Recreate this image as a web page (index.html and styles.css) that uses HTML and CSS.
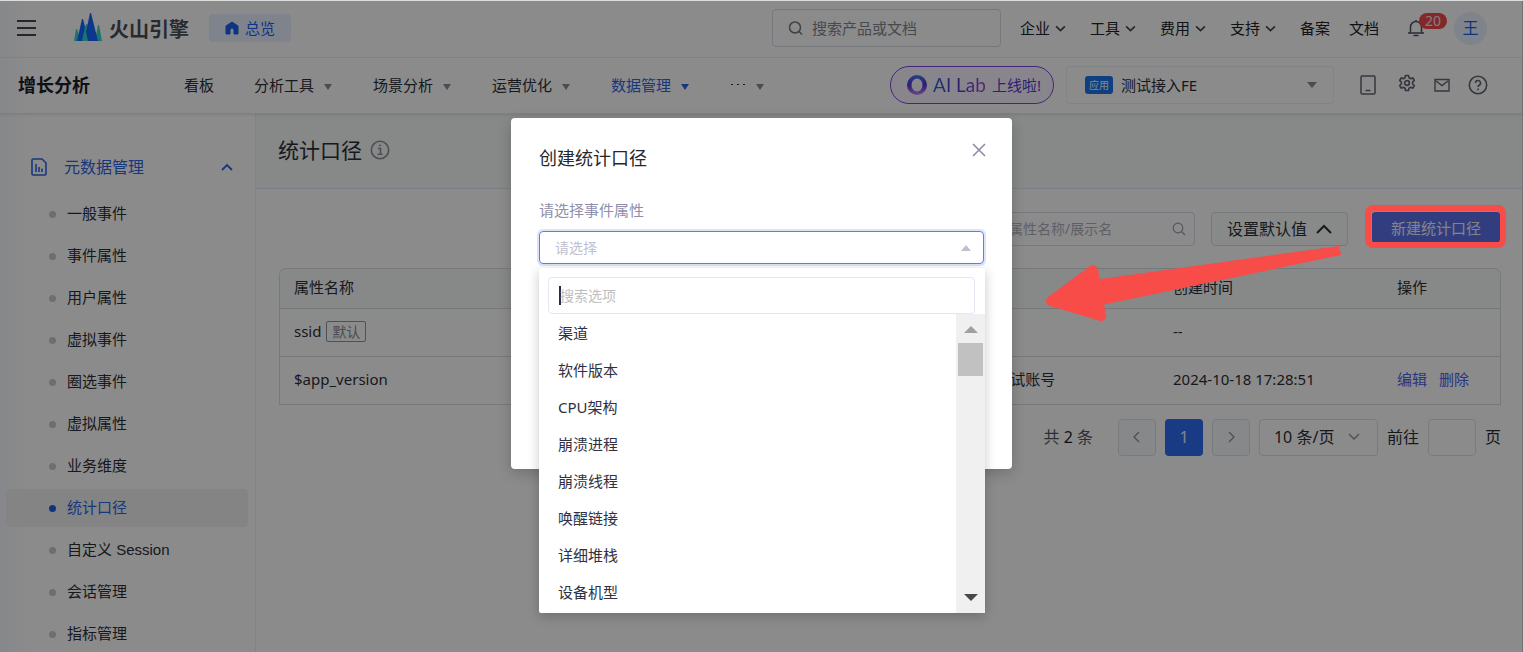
FILE: index.html
```html
<!DOCTYPE html>
<html lang="zh-CN">
<head>
<meta charset="utf-8">
<title>统计口径</title>
<link rel="stylesheet" href="styles.css">
</head>
<body>
<div class="page">
  <header class="topbar">
    <button class="menu-btn" aria-label="菜单"><svg width="20" height="18" viewBox="0 0 20 18" fill="none" stroke="currentColor" stroke-width="2"><path d="M0 2h19M0 9h19M0 16h19"/></svg></button>
    <a class="logo" href="#">
      <svg width="28" height="28" viewBox="0 0 28 28"><path fill="#32d6c4" d="M0 28L2 16h1l4 12zM6 28L12 11h1l7 17zM21 28l3-16h1l3 16z"/><path fill="#1664ff" d="M3 28L8 6h1l2 8-3 14zM14 28l-2-9L16 0h1l7 28z"/></svg>
      <span>火山引擎</span>
    </a>
    <a class="overview" href="#"><svg width="14" height="14" viewBox="0 0 14 14"><path fill="currentColor" d="M7 1l6 4v8H9V9a2 2 0 0 0-4 0v4H1V5z" stroke="currentColor" stroke-linejoin="round"/></svg>总览</a>
    <label class="top-search"><svg width="16" height="16" viewBox="0 0 16 16" fill="none" stroke="currentColor" stroke-width="1.5"><circle cx="7" cy="7.500" r="5.500"/><path d="M11 11.500l3 3"/></svg><input type="text" placeholder="搜索产品或文档" aria-label="搜索产品或文档"></label>
    <nav class="top-links">
      <a href="#">企业<svg class="chev" viewBox="0 0 10 6"><path d="M1 1l4 4 4-4"/></svg></a>
      <a href="#">工具<svg class="chev" viewBox="0 0 10 6"><path d="M1 1l4 4 4-4"/></svg></a>
      <a href="#">费用<svg class="chev" viewBox="0 0 10 6"><path d="M1 1l4 4 4-4"/></svg></a>
      <a href="#">支持<svg class="chev" viewBox="0 0 10 6"><path d="M1 1l4 4 4-4"/></svg></a>
    </nav>
    <nav class="plain-links"><a href="#">备案</a><a href="#">文档</a></nav>
    <button class="bell" aria-label="通知"><svg width="16" height="18" viewBox="0 0 16 18" fill="none" stroke="currentColor" stroke-width="1.500"><path d="M0 14h16M2.500 14V8a5.500 5.500 0 0 1 11 0v6M8 2.500V1M5.500 16.500h5"/></svg><span class="badge">20</span></button>
    <button class="avatar">王</button>
  </header>

  <div class="navbar">
    <strong class="product">增长分析</strong>
    <nav class="main-nav">
      <a href="#">看板</a>
      <a href="#">分析工具<i class="tri"></i></a>
      <a href="#">场景分析<i class="tri"></i></a>
      <a href="#">运营优化<i class="tri"></i></a>
      <a class="active" href="#">数据管理<i class="tri"></i></a>
      <a class="more" href="#"><svg width="16" height="2" viewBox="0 0 16 2" fill="currentColor"><path d="M1 0h2v1H1zM7 0h2v1H7zM13 0h2v1h-2z"/></svg><i class="tri"></i></a>
    </nav>
    <a class="ai-lab" href="#">
      <svg width="20" height="20" viewBox="0 0 20 20"><defs><linearGradient id="ring" x1="0" y1="0" x2="0" y2="1"><stop offset="0" stop-color="#3f7fe8"/><stop offset=".5" stop-color="#5a2fd8"/><stop offset="1" stop-color="#c08ae8"/></linearGradient></defs><path fill="url(#ring)" fill-rule="evenodd" d="M10 0a10 10 0 1 0 0 20 10 10 0 0 0 0-20zM10.500 3.500a5.500 6.500 0 1 1-1 13 5.500 6.500 0 0 1 1-13z"/></svg>
      <span class="ai-name">AI Lab</span><span class="ai-live">上线啦!</span>
    </a>
    <label class="app-select"><span class="app-tag">应用</span><select aria-label="应用"><option>测试接入FE</option></select><i class="tri"></i></label>
    <div class="tools">
      <button aria-label="手机"><svg width="16" height="20" viewBox="0 0 16 20" fill="none" stroke="currentColor" stroke-width="1.500"><rect x="1" y="1" width="14" height="18" rx="1"/><path d="M5.500 15.500h5"/></svg></button>
      <button class="gear" aria-label="设置"><svg width="18" height="18" viewBox="0 0 18 18" fill="none" stroke="currentColor" stroke-width="1.700" stroke-linejoin="round"><path d="M7.500 1.500h3l.5 2.300 1.600.9 2.200-.8 1.500 2.600-1.700 1.600v1.800l1.700 1.600-1.500 2.600-2.200-.8-1.600.9-.5 2.300h-3L7 14.200l-1.600-.9-2.200.8-1.500-2.600 1.700-1.600V8.100L1.700 6.500l1.500-2.600 2.200.8L7 3.800z"/><circle cx="9" cy="9" r="2.300"/></svg></button>
      <button aria-label="消息"><svg width="16" height="14" viewBox="0 0 16 14" fill="none" stroke="currentColor" stroke-width="1.400"><path d="M1 1.500h14v11.500H1zM2 3l6 4.500L14 3"/></svg></button>
      <button aria-label="帮助"><svg width="20" height="20" viewBox="0 0 20 20" fill="none" stroke="currentColor" stroke-width="1.600"><circle cx="10" cy="10" r="8.700"/><path d="M7.500 8a2.500 2.500 0 1 1 3.700 2.200c-.8.5-1.200.9-1.200 1.800M10 13.500v1.700"/></svg></button>
    </div>
  </div>

  <div class="body">
    <aside class="sidebar">
      <button class="group">
        <svg width="16" height="18" viewBox="0 0 16 18" fill="none" stroke="currentColor" stroke-width="1.600"><path d="M1 2a1 1 0 0 1 1-1h9l4 4v11a1 1 0 0 1-1 1H2a1 1 0 0 1-1-1zM5 6v8M8 9v5M11 10.500V14"/></svg>
        <span>元数据管理</span>
        <svg class="fold" width="12" height="8" viewBox="0 0 12 8" fill="none" stroke="currentColor" stroke-width="1.800"><path d="M1 7l5-5 5 5"/></svg>
      </button>
      <nav class="side-list">
        <a href="#">一般事件</a>
        <a href="#">事件属性</a>
        <a href="#">用户属性</a>
        <a href="#">虚拟事件</a>
        <a href="#">圈选事件</a>
        <a href="#">虚拟属性</a>
        <a href="#">业务维度</a>
        <a class="active" href="#">统计口径</a>
        <a href="#">自定义 Session</a>
        <a href="#">会话管理</a>
        <a href="#">指标管理</a>
      </nav>
    </aside>

    <main class="content">
      <div class="title-row">
        <h1>统计口径</h1>
        <svg width="20" height="20" viewBox="0 0 20 20" fill="none" stroke="currentColor" stroke-width="1.600"><circle cx="10" cy="10" r="8.700"/><path d="M8 8.500h2.500v5.500M7.500 14.300h5M9 5.500h2" /></svg>
      </div>
      <div class="panel">
        <div class="toolbar">
          <label class="filter"><input type="text" placeholder="搜索属性名称/展示名" aria-label="搜索属性名称"><svg width="14" height="14" viewBox="0 0 14 14" fill="none" stroke="currentColor" stroke-width="1.200"><circle cx="6" cy="6" r="4.800"/><path d="M9.500 9.500l3.500 3.500"/></svg></label>
          <button class="default-btn">设置默认值<svg width="16" height="10" viewBox="0 0 16 10" fill="none" stroke="currentColor" stroke-width="2"><path d="M1 9l7-7 7 7"/></svg></button>
          <button class="primary">新建统计口径</button>
        </div>
        <div class="table-wrap">
          <table>
            <colgroup><col><col class="col-user"><col class="col-time"><col class="col-ops"></colgroup>
            <thead><tr><th>属性名称</th><th>创建人</th><th>创建时间</th><th>操作</th></tr></thead>
            <tbody>
              <tr><td>ssid <span class="tag">默认</span></td><td></td><td>--</td><td></td></tr>
              <tr><td>$app_version</td><td>FE接入测试账号</td><td>2024-10-18 17:28:51</td><td><span class="ops"><a href="#">编辑</a><a href="#">删除</a></span></td></tr>
            </tbody>
          </table>
        </div>
        <div class="pager">
          <span class="total">共 <b>2</b> 条</span>
          <button class="pg off" aria-label="上一页"><svg width="8" height="12" viewBox="0 0 8 12"><path d="M6 1L1 6l5 5"/></svg></button>
          <button class="pg on">1</button>
          <button class="pg off" aria-label="下一页"><svg width="8" height="12" viewBox="0 0 8 12"><path d="M2 1l5 5-5 5"/></svg></button>
          <label class="size"><select aria-label="每页条数"><option>10 条/页</option></select><svg width="12" height="8" viewBox="0 0 12 8"><path d="M1 1l5 5 5-5"/></svg></label>
          <label class="jump">前往<input type="text">页</label>
        </div>
      </div>
    </main>
  </div>
</div>

<div class="mask"></div>

<section class="dialog" role="dialog" aria-labelledby="dialog-title">
  <div class="dialog-head">
    <h2 id="dialog-title">创建统计口径</h2>
    <button class="close" aria-label="关闭"><svg width="14" height="14" viewBox="0 0 14 14" fill="none" stroke="currentColor" stroke-width="1.500"><path d="M1 1l12 12M13 1L1 13"/></svg></button>
  </div>
  <label class="field-label" for="attr">请选择事件属性</label>
  <div class="field">
    <select id="attr"><option>请选择</option></select>
    <i class="tri up"></i>
    <div class="dropdown">
      <div class="option-search"><i class="caret"></i><input type="text" placeholder="搜索选项" aria-label="搜索选项"></div>
      <div class="options-wrap">
        <ul class="options" role="listbox">
          <li role="option">渠道</li>
          <li role="option">软件版本</li>
          <li role="option">CPU架构</li>
          <li role="option">崩溃进程</li>
          <li role="option">崩溃线程</li>
          <li role="option">唤醒链接</li>
          <li role="option">详细堆栈</li>
          <li role="option">设备机型</li>
        </ul>
        <div class="scrollbar"><i class="arrow-up"></i><i class="thumb"></i><i class="arrow-down"></i></div>
      </div>
    </div>
  </div>
</section>

<svg class="callout" width="463" height="120" viewBox="0 0 463 120">
  <rect x="325" y="3" width="135" height="37" rx="5" fill="none" stroke="#f84c48" stroke-width="6"/>
  <path fill="#f84c48" stroke="#f84c48" stroke-width="10" stroke-linejoin="round" d="M8 96L50 65l8 46z"/>
  <path fill="#f84c48" d="M54 74.500L296 41l2 9L59 100z"/>
</svg>
</body>
</html>
```
FILE: styles.css
```css
* { box-sizing: border-box; }
html { height: 100%; overflow: hidden; }
body {
  margin: 0;
  height: 100%;
  overflow: hidden;
  position: relative;
  font-family: "Noto Sans", "Noto Sans CJK SC", sans-serif;
  font-size: 15px;
  line-height: 22px;
  color: #2c2f36;
  background: #fff;
}
button, input, select { font: inherit; color: inherit; margin: 0; padding: 0; border: 0; background: none; outline: 0; appearance: none; }
a { color: inherit; text-decoration: none; }
svg { display: block; flex: none; }
h1, h2, ul { margin: 0; padding: 0; font-weight: 400; list-style: none; }
i { flex: none; }

.page {
  min-height: 100%;
  display: flex;
  flex-direction: column;
  border-top: 1px solid #dcdedd;
  border-right: 1px solid #d0d0d0;
  background: linear-gradient(90deg, #f5f7fd, #fefefe 32px);
}

.tri { width: 0; height: 0; border: 5px solid transparent; border-top: 6px solid #858b98; border-bottom: 0; }

/* top bar */
.topbar { display: flex; align-items: center; height: 57px; padding: 0 35px 2px 17px; border-bottom: 1px solid #f0f0f2; color: #1d2129; }
.menu-btn { color: #42464e; }
.logo { display: flex; align-items: center; gap: 7px; margin-left: 37px; font-size: 20px; font-weight: 700; color: #4a4e56; }
.logo svg { margin-bottom: 2px; }
.logo span { padding-top: 4px; }
.overview { display: flex; align-items: center; gap: 6px; height: 28px; margin-left: 20px; padding: 0 16px; border-radius: 4px; background: #e8eefe; color: #1b5fe8; }
.top-search { display: flex; align-items: center; gap: 8px; width: 229px; height: 38px; margin-left: auto; padding: 0 15px; border: 1px solid #d5dae3; border-radius: 4px; color: #73767c; }
.top-search input { width: 100%; min-width: 0; }
.top-search input::placeholder { color: #83868c; opacity: 1; }
.top-links { display: flex; gap: 24px; margin-left: 19px; }
.top-links a { display: flex; align-items: center; gap: 5px; }
.chev { width: 11px; height: 7px; fill: none; stroke: #42464e; stroke-width: 1.5; }
.plain-links { display: flex; gap: 19px; margin-left: 24px; }
.bell { position: relative; margin-left: 29px; color: #4e5362; }
.badge { position: absolute; left: 11px; top: -6px; width: 28px; height: 16px; border-radius: 8px; background: #f0484c; color: #e8e4e4; font-size: 14px; line-height: 16px; text-align: center; }
.avatar { width: 33px; height: 33px; margin-left: 30px; border-radius: 50%; background: #e8eefe; color: #1b5fe8; font-size: 16px; }

/* product navigation */
.navbar { position: relative; display: flex; align-items: center; height: 56px; padding: 0 34px 2px 18px; border-bottom: 1px solid #e6e7ea; box-shadow: 0 1px 3px rgba(0, 0, 0, .1); }
.product { font-size: 18px; font-weight: 700; color: #1d2026; }
.main-nav { display: flex; gap: 40px; margin-left: 94px; }
.main-nav a { display: flex; align-items: center; gap: 9px; }
.main-nav .tri { margin: 4px 1px 0; border-left-width: 4px; border-right-width: 4px; }
.main-nav .active { color: #2a66e4; }
.main-nav .active .tri { border-top-color: #2a66e4; }
.ai-lab { display: flex; align-items: center; height: 38px; margin-left: auto; padding: 0 12px 0 16px; border: 1px solid #7a45e0; border-radius: 19px; background: #f8f5ff; color: #5b35c9; }
.ai-name { margin: 0 6px; font-family: Lato, sans-serif; font-size: 19px; background: linear-gradient(90deg, #3569cf, #5a35d0 50%, #a14fd0); background-clip: text; color: transparent; -webkit-text-stroke: 0; }
.app-select { display: flex; align-items: center; width: 268px; height: 38px; margin-left: 12px; padding: 0 16px 0 18px; border: 1px solid #eceef2; border-radius: 4px; }
.app-tag { flex: none; width: 28px; height: 18px; border-radius: 3px; background: #1874ec; color: #f2f4f8; font-size: 10px; line-height: 18px; text-align: center; }
.app-select select { flex: 1; min-width: 0; padding-left: 8px; }
.tools { display: flex; align-items: center; gap: 18px; margin-left: 26px; color: #616672; }
.gear { margin-left: 4px; padding-bottom: 4px; }

/* sidebar */
.body { display: flex; flex: 1; }
.sidebar { width: 256px; flex: none; padding: 35px 7px 0 6px; border-right: 1px solid #eceef0; }
.group { display: flex; align-items: center; width: 100%; height: 36px; padding: 0 15px 0 25px; font-size: 16px; color: #2a66e4; }
.group span { margin-left: 17px; }
.fold { margin-left: auto; }
.side-list { display: flex; flex-direction: column; gap: 4px; margin-top: 10px; }
.side-list a { display: flex; align-items: center; gap: 11px; height: 38px; padding-left: 43px; border-radius: 4px; font-family: "Liberation Sans", "Noto Sans CJK SC", sans-serif; }
.side-list a::before { content: ""; width: 7px; height: 7px; border-radius: 50%; background: #c5c8d2; }
.side-list .active { background: #f1f1f2; color: #2a66e4; }
.side-list .active::before { background: #1b5fe8; }

/* content */
.content { flex: 1; min-width: 0; }
.title-row { display: flex; align-items: center; gap: 8px; height: 75px; padding: 0 22px 2px; border-bottom: 1px solid #dfe3ee; background: #f6faf9; color: #8f919d; }
.title-row h1 { font-size: 21px; line-height: 30px; color: #2c2f36; }
.panel { padding: 23px 21px 0 23px; }
.toolbar { display: flex; justify-content: flex-end; align-items: flex-start; height: 56px; }
.filter { display: flex; align-items: center; width: 235px; height: 34px; margin-right: 16px; padding: 0 8px 0 20px; border: 1px solid #d9dae8; border-radius: 4px; font-size: 14px; color: #9c9cab; }
.filter input { flex: 1; min-width: 0; }
.filter input::placeholder { color: #aeaebd; opacity: 1; }
.default-btn { display: flex; align-items: center; gap: 9px; height: 34px; margin-right: 24px; padding: 0 15px; border: 1px solid #d8dbe0; border-radius: 4px; background: #f8faf9; font-size: 16px; }
.primary { height: 31px; padding: 0 19px; margin-right: 1px; border-radius: 3px; background: #5b70e8; color: #f0f0f8; }
.table-wrap { border: 1px solid #d8dce0; border-bottom: 0; border-radius: 7px 7px 0 0; overflow: hidden; }
table { width: 100%; table-layout: fixed; border-collapse: collapse; }
.col-user { width: 224px; }
.col-time { width: 224px; }
.col-ops { width: 117px; }
th, td { height: 48px; padding: 0 0 2px 14px; border-bottom: 1px solid #d8dce0; text-align: left; font-weight: 400; }
th { height: 39px; background: #f6f7f7; }
.tag { display: inline-block; margin-left: 1px; padding: 0 5px; border: 1px solid #8b94a0; border-radius: 2px; font-size: 14px; line-height: 19px; color: #858b95; }
.ops { display: flex; gap: 12px; color: #4b5fe6; }
.pager { display: flex; justify-content: flex-end; align-items: center; gap: 9px; margin-top: 14px; font-size: 16px; }
.pager svg { fill: none; stroke: #8a8e98; stroke-width: 1.3; }
.total { margin-right: 16px; color: #54585f; }
.total b { font-weight: 400; color: #1d2129; }
.pg { display: flex; align-items: center; justify-content: center; width: 38px; height: 37px; border-radius: 4px; }
.off { border: 1px solid #dcdfe4; background: #f6f7f9; }
.on { background: #2d6cf0; color: #eef2fb; }
.size { display: flex; align-items: center; width: 119px; height: 37px; padding: 0 17px 0 14px; border: 1px solid #dcdfe4; border-radius: 4px; }
.size select { flex: 1; min-width: 0; }
.jump { display: flex; align-items: center; gap: 9px; }
.jump input { width: 48px; height: 37px; border: 1px solid #dcdfe4; border-radius: 4px; }

/* dialog */
.mask { position: absolute; inset: 1px 0 0; background: rgba(0, 0, 0, .45); }
.dialog { position: absolute; top: 118px; left: 0; right: 0; width: 501px; min-height: 351px; margin: 0 auto; padding: 27px 28px; border-radius: 4px; background: #fff; box-shadow: 0 4px 14px rgba(0, 0, 0, .2); }
.dialog-head { display: flex; justify-content: space-between; align-items: flex-start; }
.dialog-head h2 { font-size: 18px; line-height: 26px; color: #26282c; }
.close { margin: -2px -2px 0 0; color: #8988a8; }
.field-label { display: block; margin-top: 28px; color: #8f8eab; }
.field { position: relative; display: flex; align-items: center; height: 33px; margin-top: 10px; padding: 0 12px 0 15px; border: 1px solid #5f7bf2; border-radius: 4px; box-shadow: 0 0 0 2px #dce3fb; }
.field > select { flex: 1; font-size: 14px; color: #c0bfd0; }
.up { border-top: 0; border-bottom: 6px solid #c0bfd0; }
.dropdown { position: absolute; top: 36px; left: -1px; right: -2px; padding-top: 9px; border-radius: 2px; background: #fff; box-shadow: 0 3px 12px rgba(0, 0, 0, .22); }
.option-search { display: flex; align-items: center; height: 37px; margin: 0 10px 0 9px; padding: 0 10px; border: 1px solid #e6e5f6; border-radius: 4px; font-size: 14px; }
.caret { width: 2px; height: 19px; margin-right: -1px; background: #2b2a42; }
.option-search input { flex: 1; }
.option-search input::placeholder { color: #bfbfbf; opacity: 1; }
.options-wrap { display: flex; height: 299px; }
.options { flex: 1; display: grid; grid-auto-rows: 1fr; align-items: center; padding: 0 0 2px 19px; color: #303142; }
.scrollbar { display: flex; flex-direction: column; align-items: center; width: 29px; padding: 12px 0; background: #f0f0f0; }
.arrow-up, .arrow-down { width: 0; height: 0; border: 7px solid transparent; }
.arrow-up { border-top: 0; border-bottom-color: #a0a0a0; }
.arrow-down { margin-top: auto; border-bottom: 0; border-top-color: #484848; }
.thumb { width: 25px; height: 33px; margin-top: 10px; background: #c1c1c1; }

.callout { position: absolute; top: 205px; right: 17px; }
```
